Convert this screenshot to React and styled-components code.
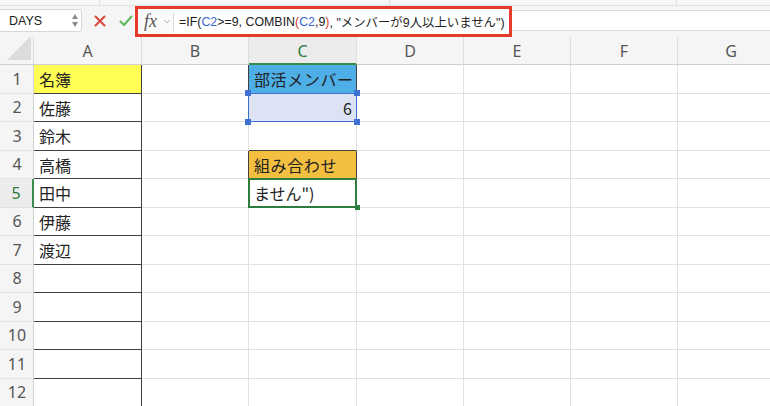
import React from "react";
import styled, { createGlobalStyle } from "styled-components";

const Global = createGlobalStyle`
  html, body { margin: 0; padding: 0; background: #ffffff; overflow: hidden; }
  body { font-family: "Liberation Sans", "Noto Sans CJK JP", sans-serif; }
  * { box-sizing: border-box; }
`;

const Page = styled.div`
  width: 770px;
  height: 406px;
  overflow: hidden;
  display: flex;
  flex-direction: column;
  background: #f5f5f5;
`;

const TopStrip = styled.div`
  height: 6px;
  flex: none;
  display: flex;
  border-bottom: 1px solid #e2e2e2;
  background: #f6f6f6;
`;

const StripSeg = styled.div`
  width: ${(p) => p.$w}px;
  border-right: 1px solid #dcdcdc;
`;

const FormulaBar = styled.div`
  height: 31px;
  flex: none;
  display: flex;
  align-items: flex-start;
  background: #f5f5f5;
  position: relative;
  z-index: 2;
`;

const NameBox = styled.div`
  width: 82px;
  height: 23px;
  margin-top: 3px;
  background: #ffffff;
  border: 1px solid #d8d8d8;
  border-left: none;
  border-radius: 0 3px 3px 0;
  display: flex;
  align-items: center;
  justify-content: space-between;
  padding: 0 3px 0 9px;
  font-size: 12.5px;
  color: #222;
`;

const Stepper = styled.div`
  display: flex;
  flex-direction: column;
  gap: 3px;
  align-items: center;
`;

const Tri = styled.div`
  width: 0;
  height: 0;
  border-left: 3.5px solid transparent;
  border-right: 3.5px solid transparent;
  ${(p) => (p.$down ? "border-top: 5px solid #8a8a8a;" : "border-bottom: 5px solid #8a8a8a;")}
`;

const IconButton = styled.div`
  width: ${(p) => p.$w}px;
  height: 29px;
  display: flex;
  justify-content: center;
  align-items: center;
  margin-left: ${(p) => p.$ml || 0}px;
`;

const Highlight = styled.div`
  width: 377px;
  height: 31px;
  margin-left: -1px;
  border: 3px solid #e63b2b;
  display: flex;
  align-items: center;
  background: #fafafa;
`;

const Fx = styled.div`
  font-family: "Liberation Serif", "DejaVu Serif", serif;
  font-style: italic;
  font-size: 18px;
  color: #555;
  margin-left: 6px;
  width: 17px;
  line-height: 1;
  margin-top: -2px;
`;

const Chevron = styled.div`
  margin-left: 2px;
  width: 8px;
  display: flex;
  align-items: center;
`;

const Sep = styled.div`
  width: 1px;
  height: 18px;
  background: #dadada;
  margin-left: 2px;
`;

const FormulaText = styled.div`
  flex: 1;
  height: 100%;
  display: flex;
  align-items: center;
  padding-left: 5px;
  background: #ffffff;
  font-family: "Liberation Sans", "Noto Sans CJK JP", sans-serif;
  font-size: 12.4px;
  color: #222;
  white-space: nowrap;
  overflow: hidden;
`;

const Ref = styled.span`
  color: ${(p) => p.$c};
`;

const RestField = styled.div`
  flex: 1;
  height: 21px;
  margin-top: 4px;
  background: #ffffff;
  border-top: 1px solid #dcdcdc;
  border-bottom: 1px solid #dcdcdc;
`;

const Grid = styled.div`
  display: grid;
  grid-template-columns: 34px 108px 107px 108px 107px 107px 107px 107px;
  grid-template-rows: 28px repeat(12, 28.5px);
  background: #ffffff;
  width: 785px;
`;

const Corner = styled.div`
  background: #f5f5f5;
  border-right: 1px solid #dcdcdc;
  border-bottom: 1px solid #cfcfcf;
  display: flex;
  align-items: flex-end;
  justify-content: flex-end;
  padding: 0 2px 4px 0;
`;

const ColHead = styled.div`
  background: ${(p) => (p.$active ? "#ececec" : "#f5f5f5")};
  border-right: 1px solid #dedede;
  border-bottom: ${(p) => (p.$active ? "2px solid #3b8a4c" : "1px solid #cfcfcf")};
  display: flex;
  align-items: center;
  justify-content: center;
  font-family: "Noto Sans", "Liberation Sans", sans-serif;
  font-size: 16px;
  color: ${(p) => (p.$active ? "#2f7d3e" : "#555")};
  padding-top: ${(p) => (p.$active ? 2 : 1)}px;
`;

const RowHead = styled.div`
  background: ${(p) => (p.$active ? "#ececec" : "#f5f5f5")};
  border-right: ${(p) => (p.$active ? "2px solid #3b8a4c" : "1px solid #d2d2d2")};
  border-bottom: 1px solid #e3e3e3;
  display: flex;
  align-items: center;
  justify-content: center;
  font-family: "Noto Sans", "Liberation Sans", sans-serif;
  font-size: 16px;
  color: ${(p) => (p.$active ? "#2f7d3e" : "#555")};
  padding-left: ${(p) => (p.$active ? 0 : 1)}px;
`;

const Cell = styled.div`
  position: relative;
  background: ${(p) => p.$bg || "#ffffff"};
  border-right: 1px solid ${(p) => (p.$darkR ? "#404040" : "#e1e1e1")};
  border-bottom: 1px solid ${(p) => (p.$darkB ? "#404040" : "#e1e1e1")};
  display: flex;
  align-items: center;
  justify-content: ${(p) => (p.$right ? "flex-end" : "flex-start")};
  padding: 1px 4px 0 5px;
  font-family: "Noto Sans CJK JP", "Liberation Sans", sans-serif;
  font-size: 16px;
  color: #222;
  white-space: nowrap;
  overflow: visible;
`;

const CellText = styled.span`
  position: relative;
  z-index: 1;
  letter-spacing: ${(p) => p.$ls || 0}px;
`;

const Selection = styled.div`
  position: absolute;
  left: -1px;
  top: -1px;
  right: -1px;
  bottom: -1px;
  border: ${(p) => (p.$active ? "2px solid #2f7d3e" : "1.5px solid #3f6fd1")};
  pointer-events: none;
  z-index: 2;
`;

const Handle = styled.div`
  position: absolute;
  width: ${(p) => p.$s}px;
  height: ${(p) => p.$s}px;
  background: ${(p) => p.$c};
  z-index: 3;
`;

const cols = ["A", "B", "C", "D", "E", "F", "G"];

const data = {
  "A1": { text: "名簿", bg: "#ffff55" },
  "A2": { text: "佐藤" },
  "A3": { text: "鈴木" },
  "A4": { text: "高橋" },
  "A5": { text: "田中" },
  "A6": { text: "伊藤" },
  "A7": { text: "渡辺" },
  "C1": { text: "部活メンバー", bg: "#4eaee6", ls: 0.6 },
  "C2": { text: "6", bg: "#dde3f4", right: true },
  "C4": { text: "組み合わせ", bg: "#f4bf40", ls: 0.6 },
  "C5": { text: "ません\")" },
};

function borders(col, row) {
  let darkR = false;
  let darkB = false;
  if (col === "A") {
    darkR = true;
    darkB = true;
  }
  if (col === "B" && (row === 1 || row === 4)) darkR = true;
  if (col === "C" && (row === 1 || row === 4 || row === 3)) darkB = true;
  if (col === "C" && (row === 1 || row === 4)) darkR = true;
  return { darkR, darkB };
}

function CornerHandles({ color, size, corners }) {
  const pos = {
    tl: { left: -size / 2 - 1, top: -size / 2 - 1 },
    tr: { right: -size / 2 - 1, top: -size / 2 - 1 },
    bl: { left: -size / 2 - 1, bottom: -size / 2 - 1 },
    br: { right: -size / 2 - 1, bottom: -size / 2 - 1 },
  };
  return corners.map((c) => <Handle key={c} $s={size} $c={color} style={pos[c]} />);
}

export default function App() {
  const rows = Array.from({ length: 12 }, (_, i) => i + 1);
  return (
    <>
      <Global />
      <Page>
        <TopStrip>
          <StripSeg $w={100} />
          <StripSeg $w={290} />
          <StripSeg $w={287} />
        </TopStrip>
        <FormulaBar>
          <NameBox>
            <span>DAYS</span>
            <Stepper>
              <Tri />
              <Tri $down />
            </Stepper>
          </NameBox>
          <IconButton $w={26} $ml={5}>
            <svg width="12" height="12" viewBox="0 0 12 12">
              <path d="M1.5 1.5 L10.5 10.5 M10.5 1.5 L1.5 10.5" stroke="#d8463c" strokeWidth="2" strokeLinecap="round" />
            </svg>
          </IconButton>
          <IconButton $w={20} $ml={3}>
            <svg width="14" height="12" viewBox="0 0 14 12">
              <path d="M1.5 6.5 L5 10 L12.5 1.5" stroke="#5cb85c" strokeWidth="2" fill="none" strokeLinecap="round" strokeLinejoin="round" />
            </svg>
          </IconButton>
          <Highlight>
            <Fx>fx</Fx>
            <Chevron>
              <svg width="8" height="5" viewBox="0 0 8 5">
                <path d="M1 1 L4 4 L7 1" stroke="#b5b5b5" strokeWidth="1" fill="none" />
              </svg>
            </Chevron>
            <Sep />
            <FormulaText>
              =IF(<Ref $c="#3767d6">C2</Ref>&gt;=9, COMBIN<Ref $c="#d03a2f">(</Ref>
              <Ref $c="#3767d6">C2</Ref>,9<Ref $c="#d03a2f">)</Ref>, "メンバーが9人以上いません")
            </FormulaText>
          </Highlight>
          <RestField />
        </FormulaBar>
        <Grid>
          <Corner>
            <svg width="24" height="24" viewBox="0 0 24 24">
              <polygon points="24,0 24,24 0,24" fill="#dcdcdc" />
            </svg>
          </Corner>
          {cols.map((c) => (
            <ColHead key={c} $active={c === "C"}>
              {c}
            </ColHead>
          ))}
          {rows.map((r) => (
            <React.Fragment key={r}>
              <RowHead $active={r === 5}>{r}</RowHead>
              {cols.map((c) => {
                const id = c + r;
                const d = data[id] || {};
                const b = borders(c, r);
                return (
                  <Cell key={id} $bg={d.bg} $right={d.right} $darkR={b.darkR} $darkB={b.darkB}>
                    {d.text && <CellText $ls={d.ls}>{d.text}</CellText>}
                    {id === "C2" && (
                      <>
                        <Selection />
                        <CornerHandles color="#3f6fd1" size={6} corners={["tl", "tr", "bl", "br"]} />
                      </>
                    )}
                    {id === "C5" && (
                      <>
                        <Selection $active />
                        <CornerHandles color="#2f7d3e" size={5} corners={["br"]} />
                      </>
                    )}
                  </Cell>
                );
              })}
            </React.Fragment>
          ))}
        </Grid>
      </Page>
    </>
  );
}
